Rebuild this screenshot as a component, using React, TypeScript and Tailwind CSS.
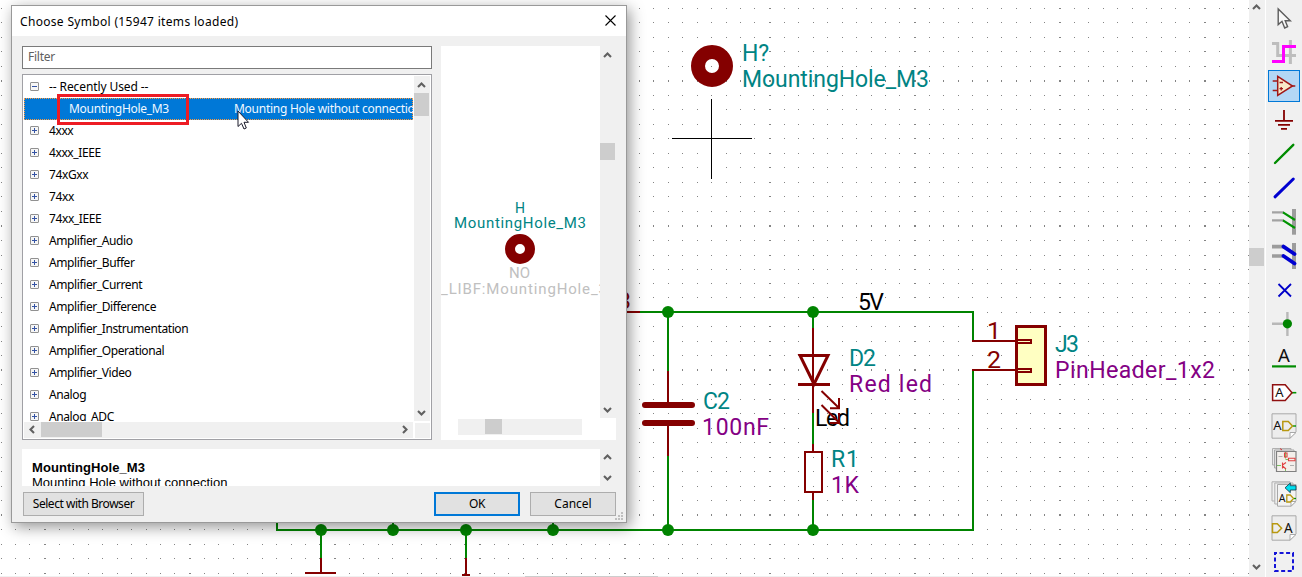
import React from "react";

const WIRE = "#008400";
const PART = "#840000";
const TEAL = "#008484";
const PURPLE = "#840084";

const gridOffsets = [0, 15, 29, 44, 58, 73, 87, 102, 116, 130];
const gridRows = [
  8, 22, 37, 51, 66, 80, 95, 109, 124, 138, 153, 167, 182, 196, 211, 225, 240, 255, 269, 283, 297, 312, 326, 341, 355,
  369, 384, 399, 413, 428, 442, 457, 471, 486, 500, 514, 529, 544, 558, 573,
];
const tallRows = [80, 225, 369, 514];

function gridPath() {
  let d = "";
  for (let base = -101; base < 1249; base += 145) {
    for (const off of gridOffsets) {
      const x = base + off;
      if (x < 0 || x > 1248) continue;
      const w = off === 0 ? 2 : 1;
      for (const y of gridRows) {
        const h = tallRows.includes(y) ? 2 : 1;
        d += `M${x} ${y}h${w}v${h}h${-w}z`;
      }
    }
  }
  return d;
}

type LabelProps = {
  x: number;
  y: number;
  w: number;
  fill: string;
  children: string;
  size?: number;
  stretch?: boolean;
};

function Label({ x, y, w, fill, children, size = 23, stretch = false }: LabelProps) {
  return (
    <text
      x={x}
      y={y}
      fill={fill}
      fontSize={size}
      textLength={w}
      lengthAdjust={stretch ? "spacingAndGlyphs" : "spacing"}
      xmlSpace="preserve"
    >
      {children}
    </text>
  );
}

function Schematic() {
  const junctions = [
    [668, 312], [813, 312], [668, 530], [813, 530], [321, 530], [393, 530], [466, 530], [553, 530],
  ];
  return (
    <svg width="1249" height="577" className="block font-[Roboto,sans-serif]">
      <path d={gridPath()} fill="#848484" shapeRendering="crispEdges" />
      <g fill="none" strokeWidth="2" shapeRendering="crispEdges">
        <path
          stroke={WIRE}
          d="M640 312H973V341M973 371V530H277V520M668 312V371M668 456V530M813 312V328M813 413V444M813 500V530M321 530V558M466 530V558M393 520V530M553 520V530"
        />
        <path
          stroke={PART}
          d="M620 312H640M668 371V403M668 425V456M813 328V413M813 444V452M813 493V500M972 341H1016M972 370H1016M321 558V574M305 573H336M466 558V575M462 574.5H470"
        />
        <path stroke={PART} d="M805 452H822V492H805Z" />
      </g>
      {junctions.map(([x, y]) => (
        <circle key={`${x}-${y}`} cx={x} cy={y} r="6" fill={WIRE} />
      ))}
      <path d="M645 405H692M645 423H692" stroke={PART} strokeWidth="6" strokeLinecap="round" />
      <path d="M800 355.5H828L814 384ZM798 384.5H830" fill="none" stroke={PART} strokeWidth="3" />
      <rect x="1016.5" y="326.5" width="29" height="58" fill="#ffffc2" stroke={PART} strokeWidth="3" />
      <path d="M1016 340H1031V343H1016M1016 369H1031V372H1016" fill="none" stroke={PART} strokeWidth="2" />

      <Label x={611} y={309} w={20} fill={PART}>33</Label>
      <Label x={858} y={310} w={26} fill="#000">5V</Label>
      <Label x={849} y={366} w={27} fill={TEAL}>D2</Label>
      <Label x={849} y={392} w={83} fill={PURPLE}>Red led</Label>
      <Label x={703} y={409} w={27} fill={TEAL}>C2</Label>
      <Label x={702} y={435} w={67} fill={PURPLE}>100nF</Label>
      <Label x={815} y={426} w={35} fill="#000">Led</Label>
      <Label x={831} y={467} w={28} fill={TEAL}>R1</Label>
      <Label x={831} y={493} w={28} fill={PURPLE}>1K</Label>
      <Label x={987} y={339} w={14} fill={PART} stretch>1</Label>
      <Label x={987} y={368} w={14} fill={PART} stretch>2</Label>
      <Label x={1055} y={352} w={24} fill={TEAL}>J3</Label>
      <Label x={1055} y={378} w={160} fill={PURPLE}>PinHeader_1x2</Label>
      <Label x={742} y={61} w={27} fill={TEAL}>H?</Label>
      <Label x={742} y={87} w={187} fill={TEAL}>MountingHole_M3</Label>

      <path
        d="M821.5 391L839 408M839 398V409M830 408.3H840M821.5 405L839 422.5M839 413V424M830 423H840"
        fill="none"
        stroke={PART}
        strokeWidth="2"
      />
      <circle cx="712" cy="66" r="14" fill="none" stroke={PART} strokeWidth="14" />
      <path d="M672 138.5H752M711.5 99V179" stroke="#000" strokeWidth="1" />
    </svg>
  );
}

function Arrow({ dir }: { dir: "up" | "down" | "left" | "right" }) {
  const d = {
    up: "M1 6L4.5 2.5L8 6",
    down: "M1 3L4.5 6.5L8 3",
    left: "M6 1L2.5 4.5L6 8",
    right: "M3 1L6.5 4.5L3 8",
  }[dir];
  return (
    <svg width="9" height="9" className="block shrink-0">
      <path d={d} fill="none" stroke="#606060" strokeWidth="2.1" />
    </svg>
  );
}

const libraries = [
  "4xxx", "4xxx_IEEE", "74xGxx", "74xx", "74xx_IEEE", "Amplifier_Audio", "Amplifier_Buffer", "Amplifier_Current",
  "Amplifier_Difference", "Amplifier_Instrumentation", "Amplifier_Operational", "Amplifier_Video", "Analog", "Analog_ADC",
];

function Toggle({ open = false }: { open?: boolean }) {
  return (
    <svg width="9" height="9" className="-mt-px block shrink-0">
      <rect x="0.5" y="0.5" width="8" height="8" rx="0.5" fill="#f6f6f6" stroke="#919191" />
      <path d={open ? "M2 4.5H7" : "M2 4.5H7M4.5 2V7"} stroke="#3453a4" />
    </svg>
  );
}

function Tree() {
  return (
    <div className="flex h-[366px] w-[410px] flex-col border border-[#a0a0a5] bg-white p-px">
      <div className="flex h-[345px]">
        <div className="w-[389px] overflow-hidden">
          <div className="flex h-[22px] items-center gap-[10px] pl-[6px]">
            <Toggle open />
            <span className="tracking-[-0.1px]">-- Recently Used --</span>
          </div>
          <div className="flex h-[22px] items-center border border-dotted border-[#ff9a3c] bg-[#0078d7] pl-[44px] whitespace-nowrap text-[#f0f8ff]">
            <span className="w-[165px] shrink-0 tracking-[-0.29px]">MountingHole_M3</span>
            <span className="tracking-[-0.27px]">Mounting Hole without connection</span>
          </div>
          {libraries.map((name) => (
            <div key={name} className="flex h-[22px] items-center gap-[10px] pl-[6px] whitespace-nowrap">
              <Toggle />
              <span className="tracking-[-0.4px]">{name}</span>
            </div>
          ))}
        </div>
        <div className="ml-px flex w-4 flex-col items-center bg-[#f0f0f0]">
          <div className="flex h-[17px] items-center pr-[2px] pt-px"><Arrow dir="up" /></div>
          <div className="h-[23px] w-[15px] self-start bg-[#cdcdcd]" />
          <div className="mt-auto flex h-[17px] items-center pr-[2px]"><Arrow dir="down" /></div>
        </div>
      </div>
      <div className="mt-px flex h-4">
        <div className="flex w-[389px] items-center bg-[#f0f0f0] pb-[2px]">
          <div className="flex w-[17px] justify-center"><Arrow dir="left" /></div>
          <div className="-mb-[2px] h-[15px] w-[61px] shrink-0 self-start bg-[#cdcdcd]" />
          <div className="ml-auto flex w-[17px] justify-center"><Arrow dir="right" /></div>
        </div>
        <div className="mt-px ml-[2px] w-[15px] bg-[#f0f0f0]" />
      </div>
    </div>
  );
}

function Preview() {
  return (
    <div className="flex h-[394px] w-[175px] flex-col bg-white">
      <div className="flex h-[372px]">
        <svg width="159" height="372" viewBox="441 46 159 372" className="block shrink-0 font-[Roboto,sans-serif]">
          <Label x={515} y={213} w={10} fill={TEAL} size={15} stretch>H</Label>
          <Label x={454} y={228} w={132} fill={TEAL} size={15}>MountingHole_M3</Label>
          <circle cx="520" cy="249" r="10" fill="none" stroke={PART} strokeWidth="10" />
          <Label x={509} y={278} w={21} fill="#c0c0c0" size={15}>NO</Label>
          <Label x={441} y={294} w={166} fill="#c0c0c0" size={15}>_LIBF:MountingHole_3</Label>
        </svg>
        <div className="flex w-4 flex-col items-center bg-[#f0f0f0]">
          <div className="flex h-[18px] items-center pr-[2px]"><Arrow dir="up" /></div>
          <div className="mt-[79px] h-[17px] w-[15px] self-start bg-[#cdcdcd]" />
          <div className="mt-auto flex h-[17px] items-center pr-[2px]"><Arrow dir="down" /></div>
        </div>
      </div>
      <div className="mt-px ml-[17px] h-4 w-[124px] bg-[#f0f0f0]">
        <div className="ml-[27px] h-[15px] w-[17px] bg-[#cdcdcd]" />
      </div>
    </div>
  );
}

function Dialog() {
  return (
    <div className="absolute top-[5px] left-[11px] flex h-[518px] w-[616px] flex-col border border-[#999] bg-[#f0f0f0] font-['Noto_Sans',sans-serif] text-[12px] leading-none text-black shadow-[3px_4px_14px_rgba(0,0,0,0.42)]">
      <div className="flex h-[30px] items-center justify-between bg-white pr-[10px] pl-2">
        <span className="pt-[2px] tracking-[0.32px]">Choose Symbol (15947 items loaded)</span>
        <svg width="11" height="11" className="-mt-[2px] block">
          <path d="M0.5 0.5L10.5 10.5M10.5 0.5L0.5 10.5" stroke="#000" strokeWidth="1.1" />
        </svg>
      </div>
      <div className="flex gap-[9px] pt-[10px] pl-[10px]">
        <div className="flex flex-col gap-[5px]">
          <div className="flex h-[23px] items-center border border-[#7a7a7a] bg-white pb-px pl-[5px] tracking-[-0.25px] text-[#606060]">Filter</div>
          <Tree />
        </div>
        <Preview />
      </div>
      <div className="mt-[9px] ml-[10px] flex h-[37px] w-[594px] font-['Liberation_Sans',sans-serif] text-[13px]">
        <div className="w-[578px] overflow-hidden bg-white pt-[11px] pl-[10px]">
          <div className="h-[15px] leading-4 font-bold tracking-[0.07px]">MountingHole_M3</div>
          <div className="h-4 leading-4 tracking-[0.01px]">Mounting Hole without connection</div>
        </div>
        <div className="flex w-4 flex-col items-center justify-between py-1 pr-[2px]">
          <Arrow dir="up" />
          <Arrow dir="down" />
        </div>
      </div>
      <div className="mt-[6px] ml-[11px] flex h-6 w-[593px]">
        <button className="h-6 w-[121px] border border-[#adadad] bg-[#e1e1e1] tracking-[-0.47px]">Select with Browser</button>
        <button className="ml-auto h-6 w-[86px] border-2 border-[#0078d7] bg-[#e1e1e1] tracking-[-0.3px]">OK</button>
        <button className="ml-[10px] h-6 w-[86px] border border-[#adadad] bg-[#e1e1e1]">Cancel</button>
      </div>
      <svg width="8" height="8" className="absolute right-[3px] bottom-[2px]">
        <path d="M6 0h2v2h-2zM3 3h2v2h-2zM6 3h2v2h-2zM0 6h2v2h-2zM3 6h2v2h-2zM6 6h2v2h-2z" fill="#bfbfbf" />
      </svg>
      <div className="absolute top-[88px] left-[45px] h-[31px] w-[132px] border-3 border-[#ed1c24]" />
      <svg width="13" height="21" className="absolute top-[104px] left-[225px]">
        <path
          d="M1 1V16.5L4.5 13.3L7 19L9.3 18L7 12.3H11.5Z"
          fill="#fff"
          stroke="#1a1a2a"
          strokeWidth="1"
        />
      </svg>
    </div>
  );
}

function Glyph({ x, y, size }: { x: number; y: number; size: number }) {
  return (
    <text x={x} y={y} fontSize={size} fill="#111" textAnchor="middle">A</text>
  );
}

function Paper() {
  return (
    <>
      <path d="M4 3.8H28V22L22 28.2H4Z" fill="#ededed" stroke="#a8a8a8" />
      <path d="M22 28.2V22.5H28Z" fill="#fff" stroke="#a8a8a8" />
    </>
  );
}

const tools: React.ReactNode[] = [
  <path d="M10.2 7V22.6L14 19.3L16.7 26L19.6 24.7L17.2 18.7H22.3Z" fill="#f8f8f8" stroke="#5c5c5c" strokeWidth="1.4" />,
  <g fill="none" strokeWidth="3">
    <path d="M4 7.5H9.7V19.5H28M22.4 4V28" stroke="#bdbdbd" />
    <path d="M4 25.4H15.5V10.6H28" stroke="#f0f" />
  </g>,
  <g fill="none" stroke="#a01818" strokeWidth="1.5">
    <path d="M4.7 11H10M4.7 20.5H10M24 16H27.3" />
    <path d="M9.7 6.3V25.5L24.5 16Z" fill="#f8e8c8" />
    <path d="M11.5 12.5H15M11.5 18.7H15M13.2 17V20.5" strokeWidth="1.3" />
  </g>,
  <path d="M16 6V16.8M7 16.8H25M10 20.8H22M13 24.8H19" stroke={PART} strokeWidth="1.8" />,
  <path d="M7 25L25.3 6.8" stroke="#008c00" strokeWidth="2.4" strokeLinecap="round" />,
  <path d="M7 24.8L25.3 7" stroke="#0000d0" strokeWidth="3" strokeLinecap="round" />,
  <g fill="none">
    <path d="M26 3V28.7" stroke="#9c9c9c" strokeWidth="4" />
    <path d="M4 6.4H16M4 14.4H16" stroke="#a2a2a2" strokeWidth="2.4" />
    <path d="M15 6.4L27 14M15 14.4L27 22" stroke="#009400" strokeWidth="2.2" />
  </g>,
  <g fill="none">
    <path d="M26 3V29" stroke="#9c9c9c" strokeWidth="4" />
    <path d="M4 6.6H16M4 16H16" stroke="#9c9c9c" strokeWidth="3.6" />
    <path d="M15.5 6.6L26.5 14M15.5 16L26.5 23.5" stroke="#0000d0" strokeWidth="3.8" strokeLinecap="round" />
  </g>,
  <path d="M10.5 10L23 22.5M23 10L10.5 22.5" stroke="#0000c8" strokeWidth="1.8" />,
  <g>
    <path d="M4 15.8H19M19.4 4V28" stroke="#b8b8b8" strokeWidth="2.4" />
    <circle cx="19.4" cy="15.8" r="4.6" fill={WIRE} />
  </g>,
  <g>
    <Glyph x={16} y={20.2} size={18.5} />
    <path d="M4 24.4H28" stroke="#008c00" strokeWidth="2.2" />
  </g>,
  <g>
    <path d="M24 16.7H28.3" stroke="#009400" strokeWidth="1.6" />
    <path d="M4.6 8.8H17.2L24 16.7L17.2 24.5H4.6Z" fill="#fff" stroke="#901010" strokeWidth="1.5" />
    <Glyph x={11.5} y={20.6} size={13} />
  </g>,
  <g>
    <Paper />
    <Glyph x={9.4} y={20.4} size={13} />
    <path d="M25 16H28" stroke="#009400" strokeWidth="1.4" />
    <path d="M14.8 11.6H20.3L24.5 16L20.3 20.4H14.8Z" fill="none" stroke="#b89810" strokeWidth="1.5" />
  </g>,
  <g fill="none">
    <path d="M4.5 4.5H23V21H4.5Z" fill="#e8e8e8" stroke="#b0b0b0" />
    <path d="M6.5 6H26V24H6.5Z" fill="#e8e8e8" stroke="#a8a8a8" />
    <path d="M12 4.5L14 6" stroke="#d03030" />
    <path d="M8.5 7.5H28V27.5H8.5Z" fill="#f3efeb" stroke="#808080" strokeWidth="1.2" />
    <path d="M17.5 8V14.5M17.5 24V27" stroke="#7ac060" />
    <path d="M9 21.5H13M17.5 15.5H20" stroke="#7ac060" />
    <path d="M16.5 9H19V13H16.5ZM20.5 14.3H27V16.8H20.5ZM14.5 18.5V24.5M14.5 21L18 18.5M14.5 22L18 25" stroke="#e04040" strokeWidth="1.1" />
    <path d="M10.5 12.5H14.5M22 21.5H26" stroke="#b0b0b0" />
  </g>,
  <g>
    <path d="M4 3.8H22V23H4Z" fill="#f0f0f0" stroke="#b0b0b0" />
    <path d="M6.8 5H25V26H6.8Z" fill="#f0f0f0" stroke="#b0b0b0" />
    <path d="M9.5 6.5H28V23L23 28.2H9.5Z" fill="#f3f3f3" stroke="#a8a8a8" />
    <path d="M23 28.2V23.5H28Z" fill="#fff" stroke="#a8a8a8" />
    <path d="M17 9.8L22.3 5V7.7H28V12H22.3V14.7Z" fill="#00e0f0" stroke="#103040" strokeWidth="0.8" />
    <Glyph x={14} y={24} size={10.5} />
    <path d="M25.5 20.5H28" stroke="#009400" strokeWidth="1.3" />
    <path d="M18.8 17H22.3L25.5 20.5L22.3 24H18.8Z" fill="none" stroke="#b89810" strokeWidth="1.3" />
  </g>,
  <g>
    <Paper />
    <path d="M4.5 11.8H9.3L13.6 16.3L9.3 20.6H4.5Z" fill="none" stroke="#b89810" strokeWidth="1.5" />
    <Glyph x={20.4} y={20.7} size={13.5} />
  </g>,
  <path d="M7 7H25V25H7Z" fill="none" stroke="#1414d8" strokeWidth="2" strokeDasharray="4 2.55" strokeDashoffset="2" />,
];

export default function App() {
  return (
    <div className="relative flex h-[577px] w-[1302px] overflow-hidden bg-white">
      <div className="flex w-[1249px] flex-col">
        <div className="h-[576px] overflow-hidden">
          <Schematic />
        </div>
        <div className="h-px bg-[#f0f0f0]">
          <div className="ml-[525px] h-px w-[133px] bg-[#cdcdcd]" />
        </div>
      </div>
      <div className="flex w-4 flex-col items-center bg-[#f0f0f0]">
        <div className="flex h-[15px] items-center pr-[2px]"><Arrow dir="up" /></div>
        <div className="mt-[233px] h-[18px] w-[15px] self-start bg-[#cdcdcd]" />
        <div className="mt-auto mb-[6px] pr-[2px]"><Arrow dir="down" /></div>
      </div>
      <div className="ml-px flex w-9 flex-col items-center gap-[2px] bg-[#f0f0f0] pt-[2px] font-['Noto_Sans',sans-serif]">
        {tools.map((icon, i) => (
          <div key={i} className={i === 2 ? "h-8 w-8 shrink-0 bg-[#b3d7f5] outline -outline-offset-1 outline-[#0078d7]" : "h-8 w-8 shrink-0"}>
            <svg width="32" height="32" className="block">{icon}</svg>
          </div>
        ))}
      </div>
      <Dialog />
    </div>
  );
}
